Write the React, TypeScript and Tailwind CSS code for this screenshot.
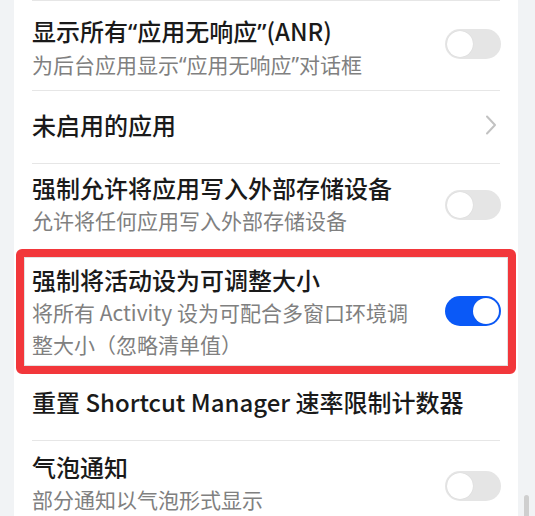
import React from 'react'

const FONT = '"Noto Sans CJK SC", "Noto Sans", sans-serif'

function Toggle({ on = false, className = '' }: { on?: boolean; className?: string }) {
  return (
    <div
      className={`shrink-0 w-[56px] h-[30px] rounded-full p-[2px] flex ${
        on ? 'bg-[#0a59f7] justify-end' : 'bg-[#e5e5e5] justify-start'
      } ${className}`}
    >
      <div className="w-[26px] h-[26px] rounded-full bg-white shadow-[0_0_1px_rgba(0,0,0,0.15)]" />
    </div>
  )
}

// curly quotes rendered narrow, like the system font does
function Q({ children }: { children: React.ReactNode }) {
  return <span className="font-['Noto_Sans']">{children}</span>
}

function Divider() {
  return <div className="h-px mx-[18px] bg-[#e6e6e6]" />
}

function Title({ children }: { children: React.ReactNode }) {
  return <div className="text-[24px] leading-[33px] font-medium text-[#1a1a1a] whitespace-nowrap">{children}</div>
}

function Sub({ children }: { children: React.ReactNode }) {
  return <div className="text-[21px] leading-[32px] text-[#808080]">{children}</div>
}

export default function App() {
  return (
    <div className="relative h-[516px] overflow-hidden bg-[#f1f3f5]" style={{ fontFamily: FONT }}>
      <div className="ml-[14px] w-[504px] bg-white">
        <Divider />

        {/* ANR */}
        <div className="h-[89px] flex pl-[18px] pr-[17px]">
          <div className="flex-1 pt-[13px]">
            <Title>显示所有<Q>“</Q>应用无响应<Q>”</Q>(ANR)</Title>
            <Sub>为后台应用显示<Q>“</Q>应用无响应<Q>”</Q>对话框</Sub>
          </div>
          <Toggle className="mt-[28px]" />
        </div>
        <Divider />

        {/* inactive apps */}
        <div className="h-[72px] flex items-center pl-[18px] pr-[21px] pb-[5px]">
          <div className="flex-1">
            <Title>未启用的应用</Title>
          </div>
          <svg width="12" height="20" viewBox="0 0 12 20" fill="none">
            <polyline points="2,1.5 10,10 2,18.5" stroke="#c2c2c2" strokeWidth="2" strokeLinecap="round" strokeLinejoin="round" />
          </svg>
        </div>
        <Divider />

        {/* external storage */}
        <div className="h-[85px] flex pl-[18px] pr-[17px]">
          <div className="flex-1 pt-[7px]">
            <Title>强制允许将应用写入外部存储设备</Title>
            <Sub>允许将任何应用写入外部存储设备</Sub>
          </div>
          <Toggle className="mt-[26px]" />
        </div>

        {/* highlighted: resizable activities */}
        <div className="mx-[2px] h-[125px] rounded-[6px] border-[8px] border-[#f2373b]">
          <div className="h-full border border-[#e2e2e2] flex pl-[7px] pr-[6px]">
            <div className="flex-1 pt-[5px] pr-[20px]">
              <Title>强制将活动设为可调整大小</Title>
              <Sub>
                <span className="whitespace-nowrap">将所有 Activity 设为可配合多窗口环境调</span>
                <br />
                整大小（忽略清单值）
              </Sub>
            </div>
            <Toggle on className="mt-[38px]" />
          </div>
        </div>

        {/* shortcut manager */}
        <div className="h-[66px] flex items-center pl-[18px] pr-[17px] pb-[12px]">
          <Title>重置 Shortcut Manager 速率限制计数器</Title>
        </div>
        <Divider />

        {/* bubbles */}
        <div className="h-[90px] flex pl-[18px] pr-[17px]">
          <div className="flex-1 pt-[9px]">
            <Title>气泡通知</Title>
            <Sub>部分通知以气泡形式显示</Sub>
          </div>
          <Toggle className="mt-[30px]" />
        </div>
      </div>

      {/* scrollbar */}
      <div className="absolute right-[6px] top-[495px] w-[5px] h-[30px] rounded-full bg-[#cfcfcf]" />
    </div>
  )
}
